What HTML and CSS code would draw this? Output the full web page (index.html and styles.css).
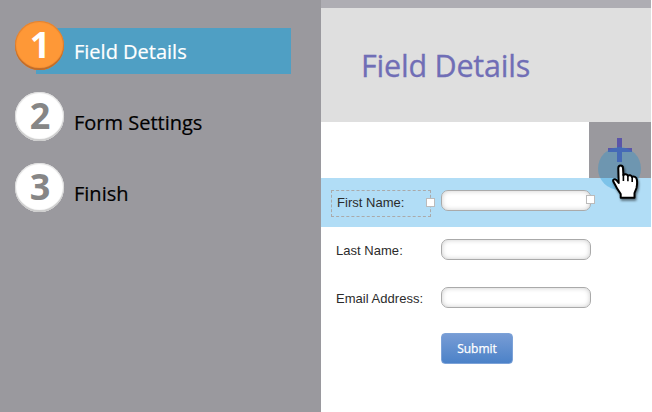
FILE: index.html
```html
<!DOCTYPE html>
<html lang="en">
<head>
<meta charset="utf-8">
<title>Field Details</title>
<link rel="stylesheet" href="styles.css">
</head>
<body>
<div class="app">
  <nav class="steps">
    <div class="step active"><span class="num">1</span><span class="name">Field Details</span></div>
    <div class="step"><span class="num">2</span><span class="name">Form Settings</span></div>
    <div class="step"><span class="num">3</span><span class="name">Finish</span></div>
  </nav>
  <main class="panel">
    <header class="head"><h1>Field Details</h1></header>
    <div class="toolbar">
      <button class="add" aria-label="Add field">
        <svg width="24" height="24" viewBox="0 0 24 24"><path d="M9 0h5v10h10v4H14v10H9V14H0v-4h9z" fill="#5b55a8"/></svg>
      </button>
      <span class="halo"></span>
      <svg class="cursor" width="42" height="48" viewBox="0 0 42 48">
        <path d="M14.300 10.200c0-3.600 4.700-3.600 4.700 0l.4 7c1-1.600 4-1.200 4.400.6 1.200-1.200 3.800-.7 4.200 1.200 1.600-1.200 4.600 0 4.900 2.800.4 3 .3 5.200-.4 8.200L30.500 35v4.700H16.700V36c-1.700-2.600-3.500-5-5-8.200L9.300 23.500c-.8-2.300 1.700-2.900 3-1.500l2.400 3z" fill="#fff" stroke="#000" stroke-width="2" stroke-linejoin="round"/>
        <path d="M19.400 16v7M23.900 17.500v5.800M28.200 19v5" stroke="#000" stroke-width="1.600"/>
      </svg>
    </div>
    <form class="fields">
      <div class="row selected"><label class="label">First Name:<i class="handle"></i></label><span class="input"><i class="handle"></i></span></div>
      <div class="row"><label class="label">Last Name:</label><span class="input"></span></div>
      <div class="row"><label class="label">Email Address:</label><span class="input"></span></div>
      <button class="submit" type="button">Submit</button>
    </form>
  </main>
</div>
</body>
</html>
```
FILE: styles.css
```css
* { box-sizing: border-box; }
body { margin: 0; background: #fff; font-family: "Open Sans", "Noto Sans", sans-serif; }
.app { display: flex; width: 651px; height: 412px; overflow: hidden; }
.steps { width: 321px; background: #9a999e; padding: 21px 30px 0 15px; display: flex; flex-direction: column; gap: 22px; }
.step { height: 49px; display: flex; align-items: flex-start; color: #000; }
.step.active { color: #fff; background: linear-gradient(#4f9fc4, #4f9fc4) 21px 7px / 255px 46px no-repeat; height: 53px; margin-bottom: -4px; }
.num { width: 49px; height: 49px; border-radius: 50%; background: #fff; color: #868686; box-shadow: inset 0 -2px 1px #ccc, inset 0 0 1px 1px #ddd; font-weight: 700; font-size: 36px; line-height: 48px; text-align: center; text-indent: 1px; }
.active .num { background: #fe9837; color: #fff; box-shadow: inset 0 -2px 1px #bd6b2b, inset 0 0 1px 1px #e08030; line-height: 47px; }
.name { font-size: 20px; line-height: 28px; margin: 17px 0 0 10px; white-space: nowrap; -webkit-text-stroke: .2px currentColor; }
.panel { width: 330px; background: #fff; }
.head { height: 122px; background: #dfdfdf; border-top: 8px solid #aeadb3; padding: 36px 0 0 40px; }
h1 { margin: 0; font-size: 30.500px; line-height: 42px; font-weight: 400; color: #706eb6; white-space: nowrap; letter-spacing: -.22px; -webkit-text-stroke: .3px currentColor; }
.toolbar { height: 56px; display: flex; justify-content: flex-end; position: relative; z-index: 2; }
.add { width: 62px; height: 56px; border: 0; padding: 16px 0 0 19px; background: #9a999e; display: flex; align-items: flex-start; }
.halo { position: absolute; left: 277px; top: 25px; width: 43px; height: 43px; border-radius: 50%; background: rgba(28, 147, 210, .35); }
.cursor { position: absolute; left: 283px; top: 36px; filter: drop-shadow(1px 2px 1px rgba(0, 0, 0, .5)); }
.fields { font-family: "Liberation Sans", Arial, sans-serif; }
.row { height: 48px; display: flex; align-items: flex-start; padding: 12px 0 0 15px; }
.row.selected { height: 49px; background: #b1ddf6; padding-left: 10px; }
.label { width: 105px; font-size: 13px; line-height: 24px; color: #2b2b2b; white-space: nowrap; letter-spacing: .03px; }
.selected .label { width: 100px; height: 27px; border: 1px dashed #aaa; padding-left: 5px; margin-right: 10px; position: relative; }
.input { width: 150px; height: 21px; border: 1px solid #aaa; border-radius: 7px; background: #fff; box-shadow: inset 0 0 5px #ccc; position: relative; }
.handle { position: absolute; width: 9px; height: 9px; border: 1px solid #bbb; background: #fff; right: -5px; top: 7px; }
.input .handle { top: 4px; }
.submit { display: block; width: 72px; height: 31px; margin: 10px 0 0 120px; border: 1px solid #7ca2d8; border-radius: 4px; background: linear-gradient(#779cd5, #4c82c8); color: #fff; font: 12px "Open Sans", sans-serif; padding: 0; -webkit-text-stroke: .25px currentColor; }
```
